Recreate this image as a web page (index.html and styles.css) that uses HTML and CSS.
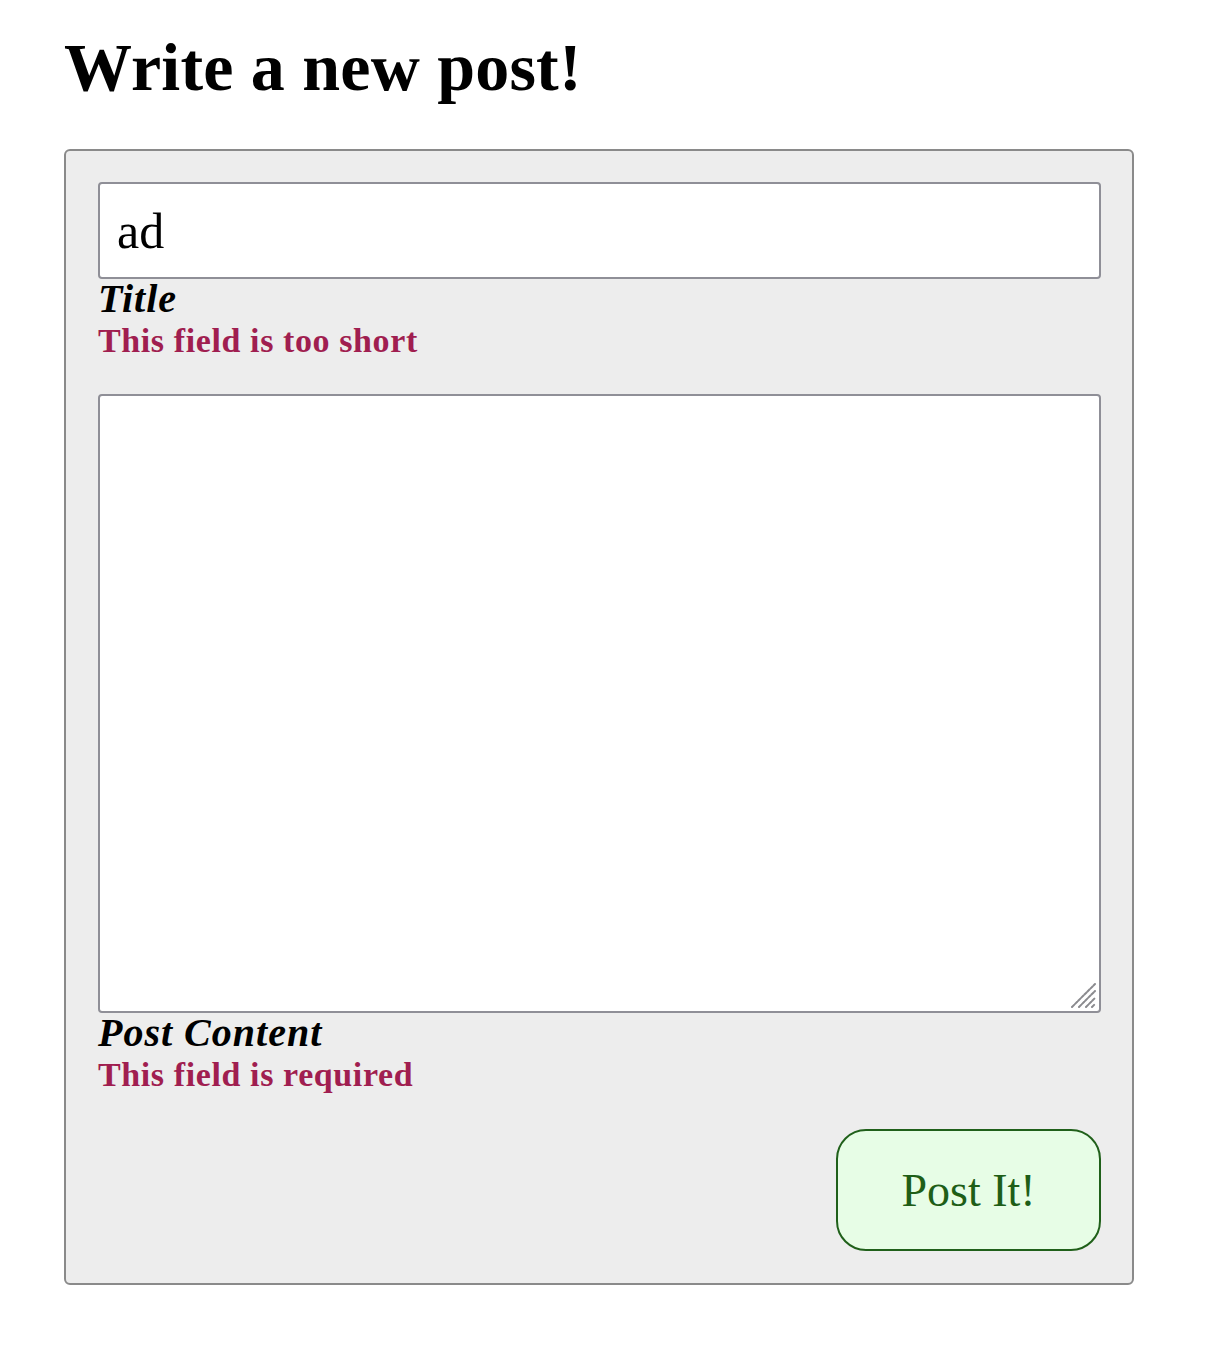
FILE: index.html
```html
<!DOCTYPE html>
<html lang="en">
<head>
<meta charset="utf-8">
<title>Write a new post!</title>
<link rel="stylesheet" href="styles.css">
</head>
<body>
<main class="page">
  <h1 class="page-title">Write a new post!</h1>
  <form class="post-form">
    <div class="field">
      <input class="text-input" type="text" value="ad">
      <label class="field-label">Title</label>
      <div class="field-error">This field is too short</div>
    </div>
    <div class="field">
      <div class="area-wrap">
        <textarea class="text-area"></textarea>
        <svg class="grip" width="26" height="26" viewBox="0 0 26 26" aria-hidden="true">
          <g stroke="#8a8a8e" stroke-width="2" stroke-linecap="round" stroke-dasharray="3 1.4">
            <line x1="2" y1="25" x2="25" y2="2"/>
            <line x1="9" y1="25" x2="25" y2="9"/>
            <line x1="16" y1="25" x2="25" y2="16"/>
            <line x1="22" y1="25" x2="25" y2="22"/>
          </g>
        </svg>
      </div>
      <label class="field-label">Post Content</label>
      <div class="field-error">This field is required</div>
    </div>
    <div class="actions">
      <button class="submit-btn" type="button">Post It!</button>
    </div>
  </form>
</main>
</body>
</html>
```

FILE: styles.css
```css
html, body {
  margin: 0;
  padding: 0;
  background: #ffffff;
}

body {
  font-family: "Liberation Serif", "Times New Roman", serif;
  color: #000000;
}

.page {
  padding: 29px 0 0 64px;
}

.page-title {
  margin: 0 0 44px 0;
  font-size: 68px;
  line-height: 76px;
  font-weight: 700;
  letter-spacing: 0.2px;
}

.post-form {
  width: 1070px;
  box-sizing: border-box;
  background: #ededed;
  border: 2px solid #8a8a8a;
  border-radius: 6px;
  padding: 31px 31px 32px 32px;
  display: flex;
  flex-direction: column;
}

.field {
  display: flex;
  flex-direction: column;
  margin-bottom: 31px;
}

.area-wrap {
  position: relative;
}

.text-input,
.text-area {
  box-sizing: border-box;
  width: 100%;
  background: #ffffff;
  border: 2px solid #8f8f97;
  border-radius: 4px;
  margin: 0;
  font-family: "Liberation Serif", "Times New Roman", serif;
  color: #000000;
  outline: none;
}

.text-input {
  height: 97px;
  padding: 0 17px;
  font-size: 50px;
}

.text-area {
  height: 619px;
  padding: 16px 17px;
  font-size: 40px;
  resize: none;
  display: block;
}

.grip {
  position: absolute;
  right: 5px;
  bottom: 5px;
  pointer-events: none;
}

.field-label {
  display: block;
  font-size: 40px;
  line-height: 40px;
  font-weight: 700;
  font-style: italic;
  letter-spacing: 1px;
}

.field-error {
  font-size: 34px;
  line-height: 44px;
  font-weight: 700;
  color: #a01e50;
  letter-spacing: 0.6px;
}

.actions {
  display: flex;
  justify-content: flex-end;
  margin-top: 1px;
}

.submit-btn {
  width: 265px;
  height: 122px;
  box-sizing: border-box;
  border: 2px solid #20601a;
  border-radius: 30px;
  background: #e7fde6;
  color: #1e5e17;
  font-family: "Liberation Serif", "Times New Roman", serif;
  font-size: 46px;
  padding: 0;
  cursor: pointer;
}
```
